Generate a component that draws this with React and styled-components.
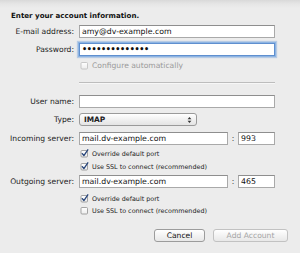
import React from "react";
import styled, { createGlobalStyle } from "styled-components";

const Global = createGlobalStyle`
  html, body { margin: 0; padding: 0; }
  body {
    width: 300px; height: 253px; overflow: hidden;
    background: #ececec;
    font-family: "DejaVu Sans", "Liberation Sans", sans-serif;
    color: #1a1a1a;
  }
`;

const Sheet = styled.div`
  width: 300px; height: 253px; box-sizing: border-box;
  padding-top: 11px;
  background: linear-gradient(#d9d9d9 0px, #e6e6e6 4px, #ececec 8px, #ececec 100%);
  display: flex; flex-direction: column;
`;

const Heading = styled.div`
  margin-left: 11px;
  font-size: 7.1px; font-weight: bold; line-height: 10px;
  color: #111;
`;

const Row = styled.div`
  display: flex; align-items: center;
  margin-top: ${p => p.$mt}px;
  height: ${p => p.$h || 13}px;
`;

const Label = styled.div`
  width: 74px; flex: none; text-align: right; padding-right: 5px;
  font-size: 7.6px; line-height: 13px; color: #222;
  white-space: nowrap;
`;

const Input = styled.div`
  box-sizing: border-box;
  width: ${p => p.$w}px; height: 13px; flex: none;
  background: #fff;
  border: 1px solid #a9a9a9;
  border-top-color: #8e8e8e;
  padding-left: 2px;
  font-size: 7.8px; line-height: 11px; color: #111;
  white-space: nowrap; overflow: hidden;
  ${p => p.$focus && `
    border-color: #5f8fcf;
    box-shadow: 0 0 0 1px #8db4e3, 0 0 1px 2px rgba(120,165,220,0.45);
  `}
`;

const Dots = styled.span`
  font-size: 8px; font-weight: bold; letter-spacing: -0.35px;
`;

const Colon = styled.div`
  width: 10px; text-align: center; flex: none;
  font-size: 7.6px; color: #333;
`;

const Popup = styled.div`
  box-sizing: border-box;
  width: 118px; height: 13px; flex: none;
  border: 1px solid #9a9a9a; border-radius: 3px;
  background: linear-gradient(#ffffff, #f1f1f1 50%, #e4e4e4);
  display: flex; align-items: center; justify-content: space-between;
  padding: 0 4px 0 4px;
  font-size: 7.4px; font-weight: 600; color: #222;
`;

const CheckRow = styled.div`
  display: flex; align-items: center; gap: 3px;
  margin-top: ${p => p.$mt}px;
  margin-left: 80px;
  height: 9px;
  font-size: ${p => p.$big ? 7.6 : 6.4}px;
  color: ${p => p.$dim ? "#9a9a9a" : "#222"};
  white-space: nowrap;
`;

const Separator = styled.div`
  margin-top: 12px; margin-left: 79px; width: 196px;
  height: 1px; background: #bdbdbd;
  box-shadow: 0 1px 0 #f7f7f7;
`;

const Buttons = styled.div`
  display: flex; justify-content: flex-end; gap: 8px;
  margin-top: 14px; padding-right: 12px;
`;

const Button = styled.div`
  box-sizing: border-box;
  width: ${p => p.$w}px; height: 13px;
  border: 1px solid ${p => p.$disabled ? "#c2c2c2" : "#9c9c9c"};
  border-radius: 3px;
  background: linear-gradient(#ffffff, #f3f3f3 50%, #e8e8e8);
  display: flex; align-items: center; justify-content: center;
  font-size: 7.6px;
  color: ${p => p.$disabled ? "#a5a5a5" : "#111"};
`;

function Checkbox({ checked, dim }) {
  return (
    <svg width="9" height="9" viewBox="0 0 9 9" style={{ flex: "none" }}>
      <defs>
        <linearGradient id="cbg" x1="0" y1="0" x2="0" y2="1">
          <stop offset="0" stopColor="#ffffff" />
          <stop offset="1" stopColor={checked ? "#dfe6ef" : "#ececec"} />
        </linearGradient>
      </defs>
      <rect x="1" y="1.5" width="6.5" height="6.5" rx="1" fill="url(#cbg)"
        stroke={dim ? "#bdbdbd" : "#8f8f8f"} strokeWidth="0.8" />
      {checked && (
        <path d="M2.3 4.6 L3.9 6.6 L7.8 0.8" fill="none" stroke="#27457a"
          strokeWidth="1.3" strokeLinecap="round" strokeLinejoin="round" />
      )}
    </svg>
  );
}

function Arrows() {
  return (
    <svg width="5" height="8" viewBox="0 0 5 8">
      <path d="M0.6 3.2 L2.5 1 L4.4 3.2 Z" fill="#333" />
      <path d="M0.6 4.8 L2.5 7 L4.4 4.8 Z" fill="#333" />
    </svg>
  );
}

export default function App() {
  return (
    <>
      <Global />
      <Sheet>
        <Heading>Enter your account information.</Heading>
        <Row $mt={4}>
          <Label>E-mail address:</Label>
          <Input $w={196}>amy@dv-example.com</Input>
        </Row>
        <Row $mt={5}>
          <Label>Password:</Label>
          <Input $w={196} $focus><Dots>••••••••••••••</Dots></Input>
        </Row>
        <CheckRow $mt={5} $big $dim>
          <Checkbox dim />
          Configure automatically
        </CheckRow>
        <Separator />
        <Row $mt={12}>
          <Label>User name:</Label>
          <Input $w={196} />
        </Row>
        <Row $mt={5}>
          <Label>Type:</Label>
          <Popup>IMAP<Arrows /></Popup>
        </Row>
        <Row $mt={6}>
          <Label>Incoming server:</Label>
          <Input $w={149}>mail.dv-example.com</Input>
          <Colon>:</Colon>
          <Input $w={37}>993</Input>
        </Row>
        <CheckRow $mt={4}>
          <Checkbox checked />
          Override default port
        </CheckRow>
        <CheckRow $mt={4}>
          <Checkbox checked />
          Use SSL to connect (recommended)
        </CheckRow>
        <Row $mt={4}>
          <Label>Outgoing server:</Label>
          <Input $w={149}>mail.dv-example.com</Input>
          <Colon>:</Colon>
          <Input $w={37}>465</Input>
        </Row>
        <CheckRow $mt={6}>
          <Checkbox checked />
          Override default port
        </CheckRow>
        <CheckRow $mt={3}>
          <Checkbox />
          Use SSL to connect (recommended)
        </CheckRow>
        <Buttons>
          <Button $w={51}>Cancel</Button>
          <Button $w={75} $disabled>Add Account</Button>
        </Buttons>
      </Sheet>
    </>
  );
}
